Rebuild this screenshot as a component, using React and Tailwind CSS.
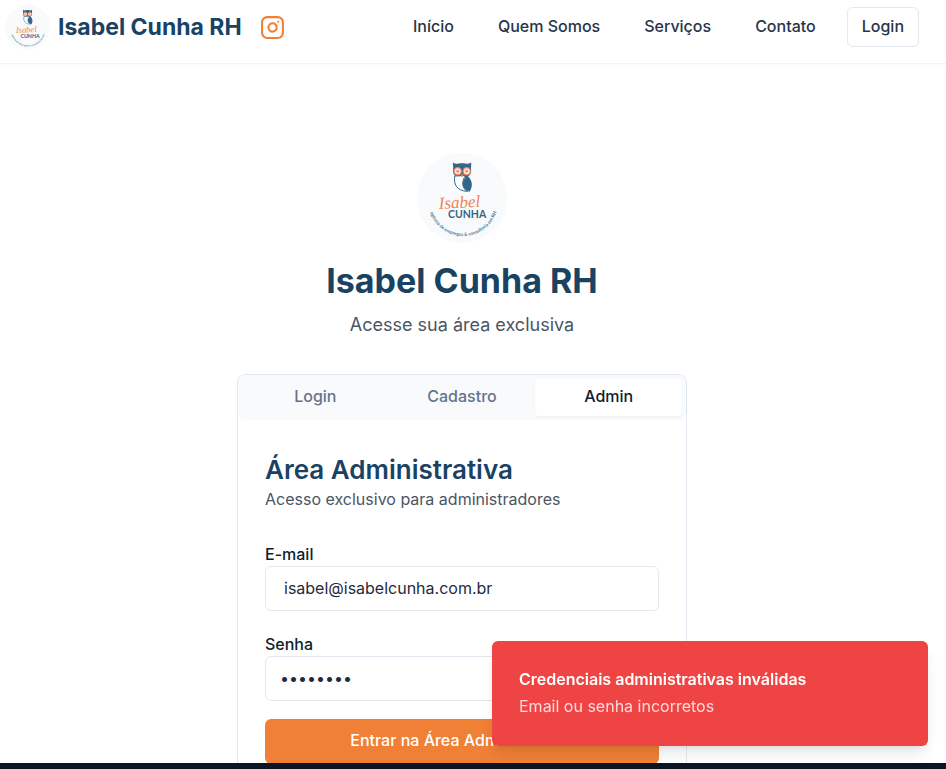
import React, { useId } from "react";

function Logo({ className }) {
  const arc = useId();
  return (
    <svg viewBox="0 0 90 90" className={className} role="img" aria-label="Isabel Cunha">
      <circle cx="45" cy="45" r="45" fill="#f8fafc" />
      <path d="M36 9.500c1.800 1.300 3.600 1.500 5.600 1.100c2.300-.6 4.600-.6 6.800 0c2 .4 3.900.2 5.800-1.100c.3 2.500-.5 4.600-.1 7.200c.5 3.600-1.300 6.300-4.500 7.300h-9c-3.200-1-5-3.700-4.500-7.300c.4-2.600-.4-4.700-.1-7.200z" fill="#33658a" />
      <path d="M37.800 23c-1.200 7.500.8 14.500 12.700 15.400c-3.600-2-4.800-5-4.700-8.400c.1-3 1.300-5.400 2.700-7.500z" fill="#fdfdfe" stroke="#33658a" strokeWidth="1" />
      <path d="M50 22.500c5 3.500 6.600 10.500 2.500 16.300c-5-1.800-7.200-4.800-6.700-8.800c.4-3 2-5.200 4.200-7.500z" fill="#33658a" />
      <circle cx="40.700" cy="18.300" r="3.600" fill="#fbe9df" stroke="#ee8459" strokeWidth="1.200" />
      <circle cx="49.700" cy="18.300" r="3.600" fill="#fbe9df" stroke="#ee8459" strokeWidth="1.200" />
      <circle cx="40.700" cy="18.300" r="1.300" fill="#ee8459" />
      <circle cx="49.700" cy="18.300" r="1.300" fill="#ee8459" />
      <path d="M43.600 21.300h3.200l-1.600 3z" fill="#f28044" />
      <text x="22" y="56" transform="rotate(-3 22 56)" fill="#f28350" fontSize="17" fontStyle="italic" fontFamily="'Liberation Serif', serif">Isabel</text>
      <text x="31" y="65" fill="#33658a" fontSize="10.500" fontWeight="700" fontFamily="Lato, sans-serif">CUNHA</text>
      <path id={arc} d="M12.500 57.500A35 35 0 0 0 80 57" fill="none" />
      <text fill="#4a7899" fontSize="4.600" fontWeight="700" fontFamily="Lato, sans-serif">
        <textPath href={"#" + arc} startOffset="50%" textAnchor="middle">agência de empregos &amp; consultoria em RH</textPath>
      </text>
    </svg>
  );
}

function InstagramIcon() {
  return (
    <svg viewBox="0 0 24 24" className="size-[25px]" fill="none" stroke="#f08035" strokeWidth="2" strokeLinecap="round" strokeLinejoin="round" aria-hidden="true">
      <rect width="20" height="20" x="2" y="2" rx="5" />
      <path d="M16 11.370A4 4 0 1 1 12.630 8 4 4 0 0 1 16 11.370z" />
      <path d="M17.500 6.500h.01" />
    </svg>
  );
}

const links = ["Início", "Quem Somos", "Serviços", "Contato"];
const tabs = ["Login", "Cadastro", "Admin"];

function Header() {
  return (
    <header className="flex h-16 shrink-0 items-start justify-between border-b border-[#f3f4f6] pl-[5px] pr-[27px] pt-[5px] shadow-[0_1px_2px_rgba(0,0,0,0.02)]">
      <div className="flex items-center">
        <Logo className="size-[45px] shrink-0" />
        <span className="ml-2 whitespace-nowrap pb-[2px] text-[23px] font-bold leading-8 text-[#1a4263]">Isabel Cunha RH</span>
        <a href="#instagram" aria-label="Instagram" className="ml-[18px]">
          <InstagramIcon />
        </a>
      </div>
      <nav className="flex items-center pt-[2px] text-base font-medium text-[#283447]">
        <div className="flex gap-11 pb-[2px]">
          {links.map((label) => (
            <a key={label} href={"#" + label} className="whitespace-nowrap">{label}</a>
          ))}
        </div>
        <button className="ml-[31px] h-10 rounded-md border border-[#e2e8f0] px-[14px] pb-[2px]">Login</button>
      </nav>
    </header>
  );
}

function Field({ id, label, type, value }) {
  return (
    <div>
      <label htmlFor={id} className="block pb-px text-base font-medium leading-[22px] text-[#0f1c2e]">{label}</label>
      <input
        id={id}
        type={type}
        defaultValue={value}
        className="block h-[45px] w-full rounded-md border border-[#e2e8f0] bg-white px-[18px] pb-[2px] text-base text-[#1f2b3d] outline-none [&[type=password]]:px-[14px]"
      />
    </div>
  );
}

function AdminCard() {
  return (
    <section className="mt-[35px] w-full max-w-[450px] rounded-lg border border-[#e2e8f0] bg-white">
      <div role="tablist" className="grid h-[45px] grid-cols-3 rounded-lg bg-[#f8fafc] p-1 text-base font-medium text-[#64748b]">
        {tabs.map((label) => (
          <button
            key={label}
            role="tab"
            aria-selected={label === "Admin"}
            className="rounded pb-[3px] aria-selected:bg-white aria-selected:text-[#0f1c2e] aria-selected:shadow-xs"
          >
            {label}
          </button>
        ))}
      </div>
      <div className="px-[27px] pb-7 pt-8">
        <h2 className="text-[26px] font-semibold leading-9 text-[#1a4263]">Área Administrativa</h2>
        <p className="text-base leading-[22px] text-[#4b5563]">Acesso exclusivo para administradores</p>
        <form className="mt-[33px]" onSubmit={(e) => e.preventDefault()}>
          <div className="flex flex-col gap-[22px]">
            <Field id="email" label="E-mail" type="email" value="isabel@isabelcunha.com.br" />
            <Field id="senha" label="Senha" type="password" value="12345678" />
          </div>
          <button className="mt-[18px] h-[45px] w-full rounded-md bg-[#f08035] pb-1 text-base font-medium text-white">
            Entrar na Área Administrativa
          </button>
        </form>
      </div>
    </section>
  );
}

export default function App() {
  return (
    <div className="flex h-screen flex-col overflow-hidden bg-white font-['Inter',sans-serif]">
      <Header />
      <main className="flex min-h-0 flex-1 flex-col items-center overflow-hidden pr-[22px] pt-[89px]">
        <Logo className="size-[90px] shrink-0" />
        <h1 className="mt-[18px] text-[34px] font-bold leading-10 text-[#1a4263]">Isabel Cunha RH</h1>
        <p className="mt-[10px] text-lg leading-7 text-[#4b5563]">Acesse sua área exclusiva</p>
        <AdminCard />
      </main>
      <div className="h-[6px] shrink-0 bg-[#0d1424]" />
      <div role="alert" className="fixed bottom-[23px] right-[18px] h-[105px] w-[436px] rounded-md bg-[#ef4444] px-[27px] pt-[25px] text-base leading-[27px] text-white shadow-lg">
        <p className="font-semibold">Credenciais administrativas inválidas</p>
        <p className="opacity-80">Email ou senha incorretos</p>
      </div>
    </div>
  );
}
